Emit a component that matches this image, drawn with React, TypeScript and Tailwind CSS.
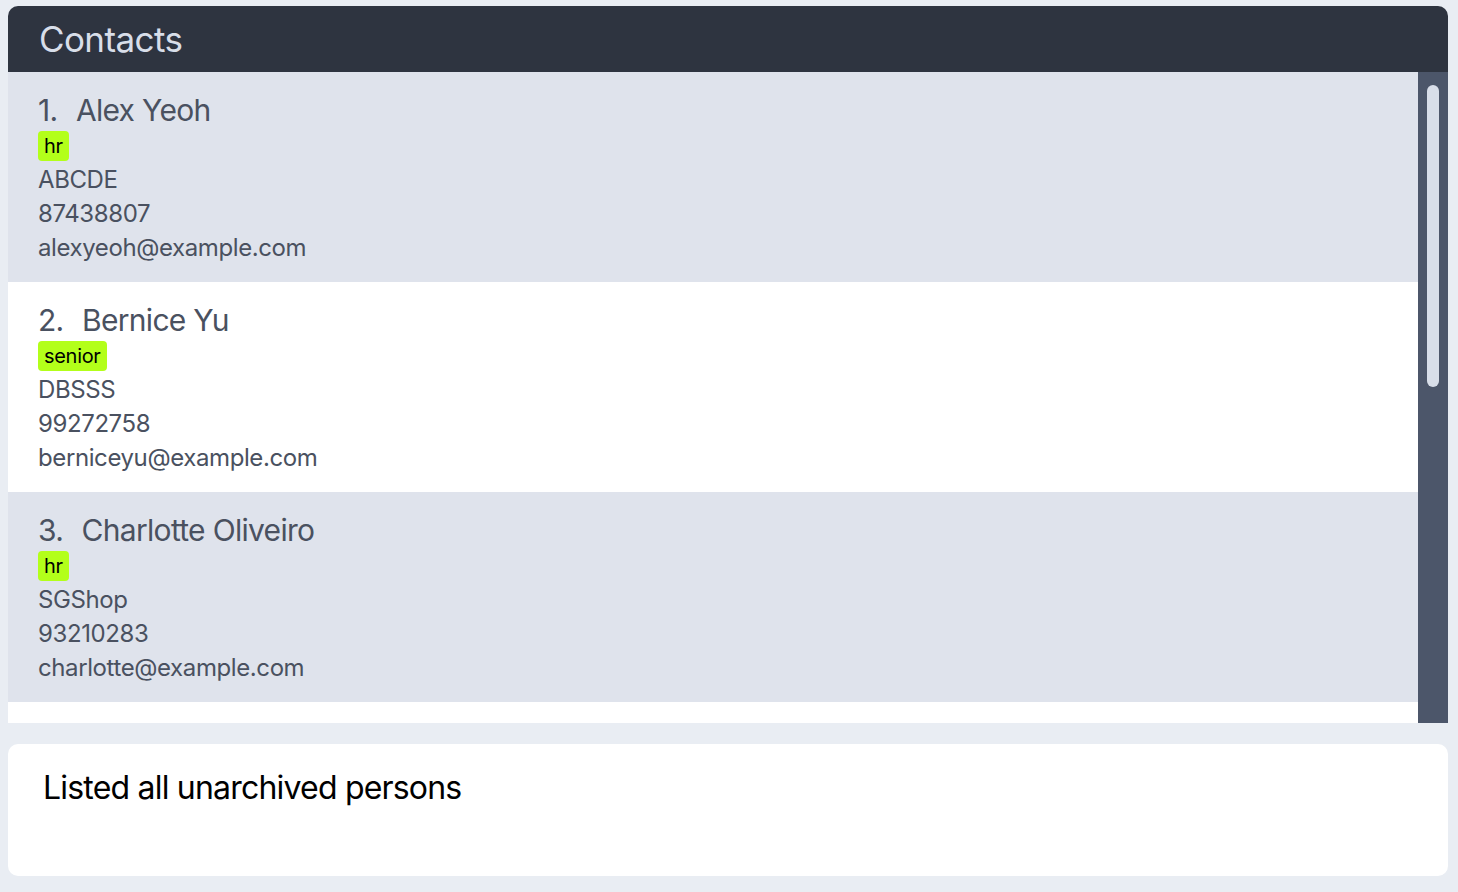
import React from "react";

const people = [
  { n: 1, name: "Alex Yeoh", tag: "hr", addr: "ABCDE", phone: "87438807", email: "alexyeoh@example.com" },
  { n: 2, name: "Bernice Yu", tag: "senior", addr: "DBSSS", phone: "99272758", email: "berniceyu@example.com" },
  { n: 3, name: "Charlotte Oliveiro", tag: "hr", addr: "SGShop", phone: "93210283", email: "charlotte@example.com" },
];

export default function App() {
  return (
    <div className="w-[1458px] h-[892px] bg-[#e9edf3] pt-[6px] pl-[8px] pr-[10px] flex flex-col overflow-hidden" style={{ fontFamily: "Inter, 'Noto Sans', sans-serif" }}>
      <div className="flex flex-col h-[717px] rounded-t-[10px] overflow-hidden">
        <div className="h-[66px] bg-[#2e3440] flex items-center px-[31px] shrink-0">
          <span className="text-[35px] text-[#d8dee9] leading-none tracking-[-0.6px]">Contacts</span>
        </div>
        <div className="flex flex-1 min-h-0">
          <div className="flex-1 bg-white flex flex-col">
            {people.map((p, i) => (
              <div key={p.n} className={`h-[210px] px-[30px] pt-[20px] ${i % 2 === 0 ? "bg-[#dfe3ec]" : "bg-white"}`}>
                <div className="text-[30px] leading-[36px] text-[#4a5160] tracking-[-0.7px]">
                  {p.n}.&nbsp;&nbsp;<span className="pl-[3px]">{p.name}</span>
                </div>
                <div className="mt-[3px] flex">
                  <span className="h-[30px] bg-[#b3ff1a] rounded-[4px] px-[6px] text-[20px] leading-[30px] text-black tracking-[-0.3px]">{p.tag}</span>
                </div>
                <div className="text-[24px] leading-[34px] text-[#4a5160] mt-[2px] tracking-[-0.4px]">
                  <div>{p.addr}</div>
                  <div>{p.phone}</div>
                  <div>{p.email}</div>
                </div>
              </div>
            ))}
          </div>
          <div className="w-[30px] bg-[#4c566a] shrink-0 pt-[13px] flex justify-center">
            <div className="w-[12px] h-[302px] bg-[#d8dee9] rounded-full"></div>
          </div>
        </div>
      </div>
      <div className="mt-[21px] h-[132px] bg-white rounded-[10px] px-[35px] pt-[24px]">
        <span className="text-[32px] leading-[40px] text-black tracking-[-0.8px]">Listed all unarchived persons</span>
      </div>
    </div>
  );
}
